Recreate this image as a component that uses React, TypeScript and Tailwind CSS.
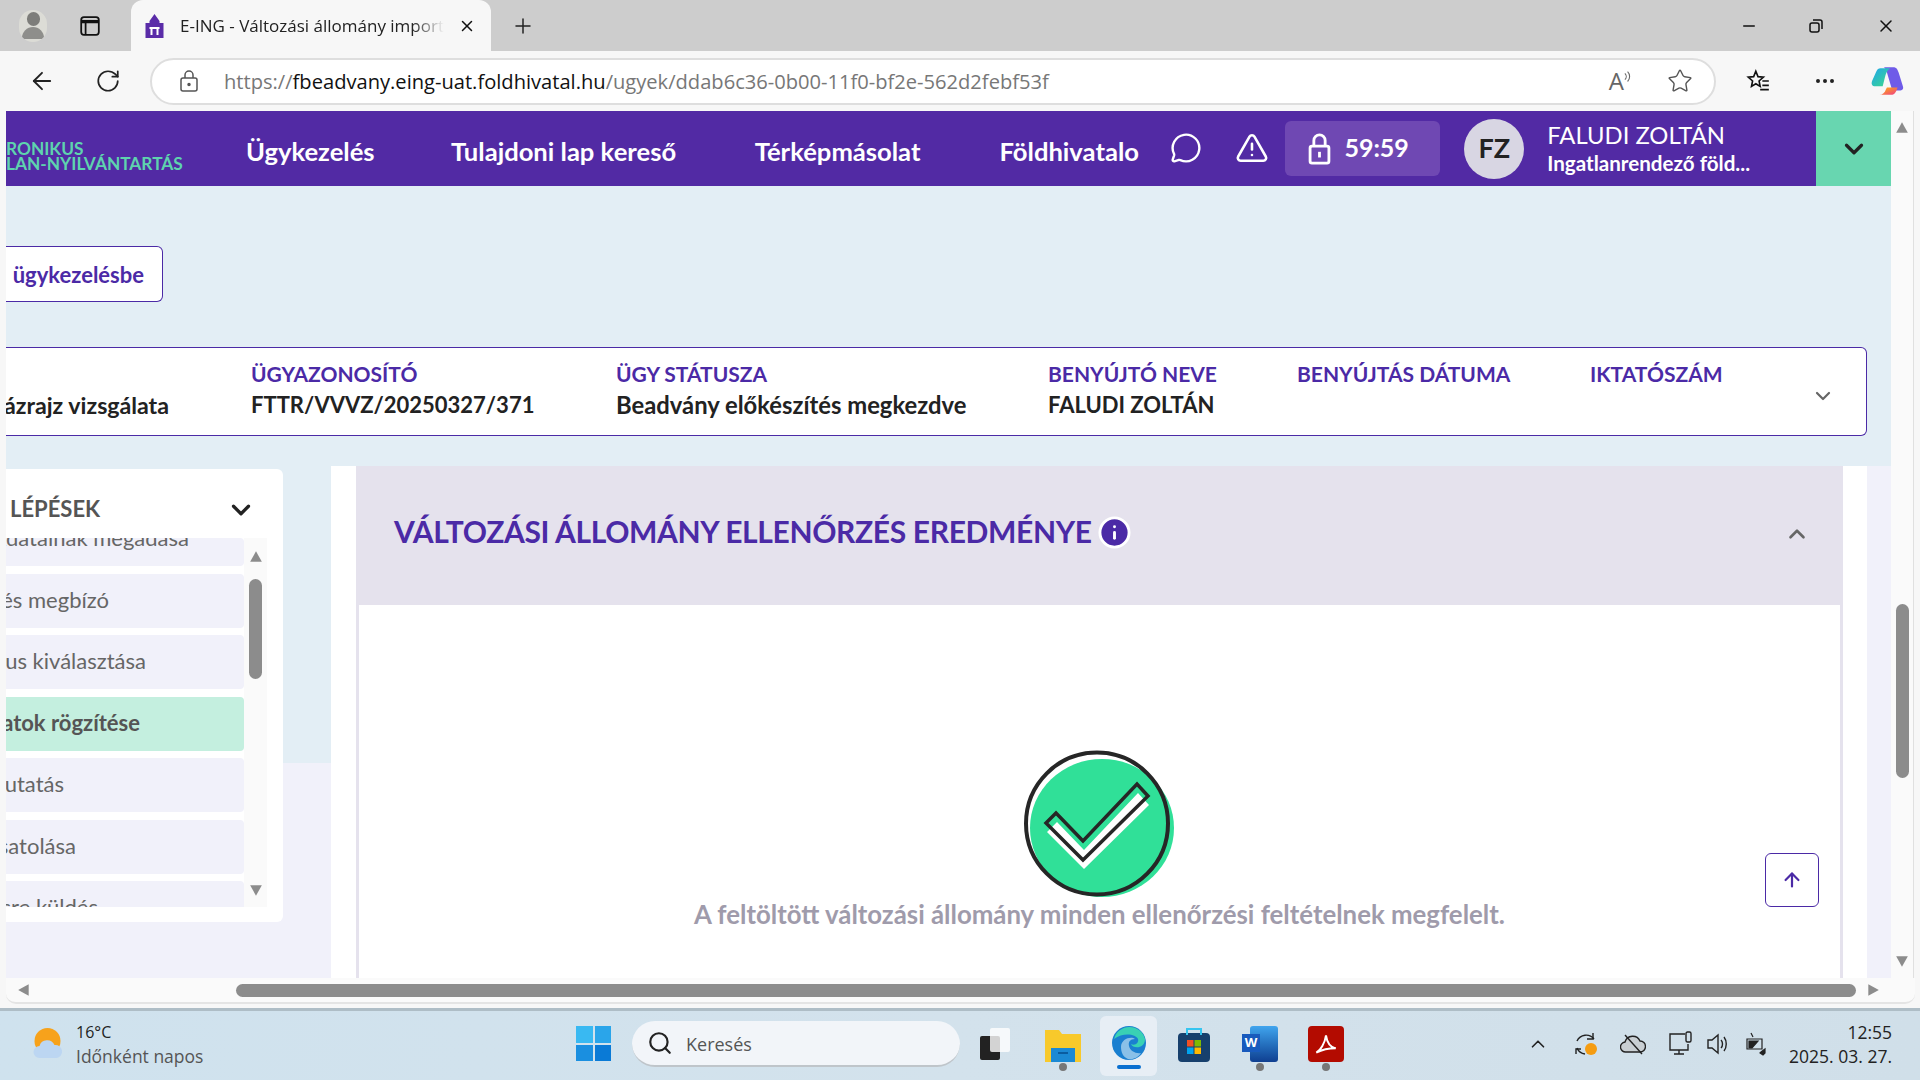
import { ArrowUp, ChevronDown, ChevronUp, MessageCircle, MoreHorizontal, Plus, RotateCw, Search, Star, TriangleAlert, X, Minus, ArrowLeft, Info } from "lucide-react";

const items = [
  { text: "Adatainak megadása", row: "h-[28px] items-start", box: "w-[183px] -mt-[14px]", active: false },
  { text: "Kérelmező és megbízó", row: "h-[54px] items-center pb-[2px]", box: "w-[103px]", active: false },
  { text: "Ügytípus kiválasztása", row: "h-[54px] items-center pb-[2px]", box: "w-[140px]", active: false },
  { text: "Adatok rögzítése", row: "h-[54px] items-center pb-[2px]", box: "w-[134px]", active: true },
  { text: "Kutatás", row: "h-[54px] items-center pb-[2px]", box: "w-[58px]", active: false },
  { text: "Csatolása", row: "h-[54px] items-center pb-[2px]", box: "w-[70px]", active: false },
  { text: "Ügyintézésre küldés", row: "h-[54px] items-center pb-[2px]", box: "w-[92px]", active: false },
];

const infoCols = [
  { label: "ÜGYAZONOSÍTÓ", value: "FTTR/VVVZ/20250327/371", w: "w-[365px]", size: "text-[22px]" },
  { label: "ÜGY STÁTUSZA", value: "Beadvány előkészítés megkezdve", w: "w-[432px]", size: "text-[23.800px]" },
  { label: "BENYÚJTÓ NEVE", value: "FALUDI ZOLTÁN", w: "w-[249px]", size: "text-[22px]" },
  { label: "BENYÚJTÁS DÁTUMA", value: "", w: "w-[293px]", size: "text-[22px]" },
  { label: "IKTATÓSZÁM", value: "", w: "w-[221px]", size: "text-[22px]" },
];

function Triangle({ dir, className }: { dir: "up" | "down" | "left" | "right"; className?: string }) {
  const pts = { up: "6,1 11,10 1,10", down: "1,2 11,2 6,11", left: "10,1 10,11 1,6", right: "2,1 2,11 11,6" }[dir];
  return (
    <svg viewBox="0 0 12 12" className={className}>
      <polygon points={pts} fill="#8c8c8c" />
    </svg>
  );
}

function TabStrip() {
  return (
    <div className="h-[51px] bg-[#cdcdcd] flex items-end shrink-0">
      <div className="w-[131px] h-[51px] flex items-center shrink-0">
        <div className="ml-[19px] w-[28px] h-[32px] rounded-full bg-[#dcdcd6] flex flex-col items-center justify-center overflow-hidden">
          <div className="w-[13px] h-[14px] rounded-full bg-[#7d7d7a]" />
          <div className="w-[22px] h-[12px] rounded-t-full bg-[#8e8e8b] mt-[1px]" />
        </div>
        <svg viewBox="0 0 20 20" className="ml-[32px] w-[22px] h-[22px]" fill="none" stroke="#111" strokeWidth="1.6">
          <rect x="2" y="2" width="16" height="16" rx="2.5" />
          <path d="M2 6h16" strokeWidth="3" />
          <path d="M6 6v12" />
        </svg>
      </div>
      <div className="w-[360px] h-[51px] bg-[#f7f7f7] rounded-t-[12px] flex items-center shrink-0">
        <svg viewBox="0 0 20 24" className="ml-[13px] w-[21px] h-[24px]">
          <path d="M10 0l5 7v2h4v15H1V9h4V7z" fill="#5a2ca8" />
          <path d="M5 13h10v2h-1v6h-2v-6H8v6H6v-6H5z" fill="#fff" />
        </svg>
        <div className="ml-[15px] w-[264px] overflow-hidden whitespace-nowrap font-['Open_Sans'] text-[17px] text-[#222] [mask-image:linear-gradient(to_right,black_88%,transparent)]">E-ING - Változási állomány importálása</div>
        <X className="ml-[14px] w-[18px] h-[18px] text-[#111]" strokeWidth={2} />
      </div>
      <div className="h-[51px] flex items-center">
        <Plus className="ml-[20px] w-[24px] h-[24px] text-[#222]" strokeWidth={1.5} />
      </div>
      <div className="flex-1 h-[51px] flex items-center justify-end text-[#111]">
        <Minus className="w-[18px] h-[18px]" strokeWidth={2} />
        <svg viewBox="0 0 16 16" className="ml-[50px] w-[16px] h-[16px]" fill="none" stroke="#111" strokeWidth="1.5">
          <rect x="2" y="5" width="9" height="9" rx="2" />
          <path d="M5 2h7a2 2 0 0 1 2 2v7" />
        </svg>
        <X className="ml-[52px] mr-[24px] w-[20px] h-[20px]" strokeWidth={1.8} />
      </div>
    </div>
  );
}

function Toolbar() {
  return (
    <div className="h-[60px] bg-[#f7f7f7] flex items-center shrink-0">
      <ArrowLeft className="ml-[28px] w-[28px] h-[28px] text-[#222]" strokeWidth={1.6} />
      <RotateCw className="ml-[39px] w-[26px] h-[26px] text-[#222]" strokeWidth={1.6} />
      <div className="ml-[29px] w-[1566px] h-[47px] rounded-full bg-white border-2 border-[#dedede] flex items-center">
        <svg viewBox="0 0 20 24" className="ml-[27px] w-[20px] h-[24px]" fill="none" stroke="#555" strokeWidth="1.5">
          <rect x="2" y="9" width="16" height="13" rx="2" />
          <path d="M6 9V6a4 4 0 0 1 8 0v3" />
          <circle cx="10" cy="15.500" r="1" fill="#555" />
        </svg>
        <div className="ml-[25px] font-['Open_Sans'] text-[20.120px] text-[#777] whitespace-nowrap">
          https://<span className="text-[#111]">fbeadvany.eing-uat.foldhivatal.hu</span>/ugyek/ddab6c36-0b00-11f0-bf2e-562d2febf53f
        </div>
        <div className="flex-1" />
        <span className="font-['Open_Sans'] text-[24px] text-[#666]">A</span>
        <svg viewBox="0 0 10 16" className="w-[9px] h-[18px] -mt-[8px]" fill="none" stroke="#666" strokeWidth="1.2">
          <path d="M1 4c2 2 2 5 0 7M4 2c3 3 3 8 0 11" />
        </svg>
        <Star className="ml-[34px] mr-[21px] w-[26px] h-[26px] text-[#555]" strokeWidth={1.3} />
      </div>
      <svg viewBox="0 0 24 24" className="ml-[29px] w-[26px] h-[26px]" fill="none" stroke="#111" strokeWidth="1.5">
        <path d="M10 3l2 5 5 .5-4 3.5 1 5-4-2.500-4 2.500 1-5L3 8.500 8 8z" />
        <path d="M16 12h6M16 16h6M14 20h8" />
      </svg>
      <MoreHorizontal className="ml-[42px] w-[24px] h-[24px] text-[#222]" strokeWidth={2} />
      <svg viewBox="0 0 32 32" className="ml-[34px] w-[34px] h-[34px]">
        <defs>
          <linearGradient id="cp1" x1="0" y1="0" x2="1" y2="1">
            <stop offset="0" stopColor="#1fa5ee" />
            <stop offset="1" stopColor="#3ddc84" />
          </linearGradient>
          <linearGradient id="cp2" x1="0" y1="0" x2="1" y2="1">
            <stop offset="0" stopColor="#ffb900" />
            <stop offset="1" stopColor="#f03a8c" />
          </linearGradient>
        </defs>
        <path d="M12 3h9c3 0 4 2 5 5l4 13c1 3-1 4-3 4h-7L15 8c-1-3-2-5-3-5z" fill="#6f5be8" />
        <path d="M9 4h9c-3 2-4 5-5 9l-2 8H4c-3 0-4-2-3-5L5 7c1-2 2-3 4-3z" fill="url(#cp1)" />
        <path d="M8 29h11c3 0 4-2 5-4l1-3H15l-1 2c-1 3-3 5-6 5z" fill="url(#cp2)" />
      </svg>
    </div>
  );
}

function Header() {
  return (
    <div className="h-[75px] bg-[#522aa4] flex items-center shrink-0 font-['Lato'] text-white">
      <div className="w-[178px] overflow-hidden flex flex-col items-end shrink-0 font-bold text-[#5ed3ae] text-[17.300px] leading-[15px] pt-[14px]">
        <div className="w-[178px] whitespace-nowrap">RONIKUS</div>
        <div className="w-[178px] whitespace-nowrap">LAN-NYILVÁNTARTÁS</div>
      </div>
      <div className="ml-[62px] w-[205px] pt-[6px] font-bold text-[25.600px] whitespace-nowrap">Ügykezelés</div>
      <div className="w-[304px] pt-[6px] font-bold text-[25.600px] whitespace-nowrap">Tulajdoni lap kereső</div>
      <div className="w-[245px] pt-[6px] font-bold text-[25.600px] whitespace-nowrap">Térképmásolat</div>
      <div className="w-[171px] pt-[6px] font-bold text-[25.600px] whitespace-nowrap overflow-hidden">Földhivatalo</div>
      <MessageCircle className="-mt-[2px] w-[32px] h-[32px]" strokeWidth={1.8} />
      <TriangleAlert className="ml-[33px] -mt-[2px] w-[34px] h-[34px]" strokeWidth={1.8} />
      <div className="ml-[16px] w-[155px] h-[55px] rounded-[6px] bg-[#6f48b3] flex items-center">
        <svg viewBox="0 0 24 34" className="ml-[23px] w-[23px] h-[32px]" fill="none" stroke="#fff" strokeWidth="3">
          <rect x="2" y="14" width="20" height="18" rx="2" />
          <path d="M6 14V8a6 6 0 0 1 12 0v6" />
          <path d="M12 20v6" />
        </svg>
        <span className="ml-[13px] -mt-[2px] font-bold text-[25px]">59:59</span>
      </div>
      <div className="ml-[24px] w-[60px] h-[60px] rounded-full bg-[#d8d6e3] flex items-center justify-center text-[#222] font-bold text-[27px]">FZ</div>
      <div className="ml-[23px] w-[269px]">
        <div className="text-[23.800px] leading-[28px] whitespace-nowrap">FALUDI ZOLTÁN</div>
        <div className="text-[20.600px] leading-[28px] font-bold whitespace-nowrap">Ingatlanrendező föld...</div>
      </div>
      <div className="w-[75px] h-[75px] bg-[#68d6b0] flex items-center justify-center">
        <ChevronDown className="w-[30px] h-[30px] text-[#222]" strokeWidth={2.6} />
      </div>
    </div>
  );
}

function InfoBox() {
  return (
    <div className="mt-[45px] mr-[24px] h-[89px] bg-white border border-[#4b2aa6] border-l-0 rounded-r-[6px] flex items-start font-['Lato']">
      <div className="w-[245px] pt-[42px] shrink-0 overflow-hidden flex">
        <div className="w-[163px] flex justify-end overflow-hidden font-bold text-[23.200px] leading-[30px] text-[#222] whitespace-nowrap">
          Tulajdoni vázrajz vizsgálata
        </div>
      </div>
      {infoCols.map((c) => (
        <div key={c.label} className={`${c.w} shrink-0 pt-[11px]`}>
          <div className="font-bold text-[21px] leading-[30px] text-[#4b2aa6] whitespace-nowrap">{c.label}</div>
          <div className={`font-bold ${c.size} leading-[32px] text-[#222] whitespace-nowrap`}>{c.value}</div>
        </div>
      ))}
      <ChevronDown className="mt-[36px] w-[24px] h-[24px] text-[#666]" strokeWidth={2.2} />
    </div>
  );
}

function Sidebar() {
  return (
    <div className="mt-[3px] w-[277px] h-[453px] bg-white rounded-r-[6px] font-['Lato'] flex flex-col">
      <div className="h-[69px] pt-[9px] flex items-center justify-between shrink-0">
        <span className="ml-[4px] font-bold text-[22px] text-[#555]">LÉPÉSEK</span>
        <ChevronDown className="mr-[27px] mt-[3px] w-[30px] h-[30px] text-[#222]" strokeWidth={2.6} />
      </div>
      <div className="h-[369px] flex">
        <div className="w-[238px] h-[369px] overflow-hidden flex flex-col gap-[7.500px] shrink-0">
          {items.map((it) => (
            <div
              key={it.text}
              className={`${it.row} shrink-0 rounded-r-[4px] flex overflow-hidden ${it.active ? "bg-[#c4efdf] font-bold text-[#555]" : "bg-[#f1f1fa] text-[#666]"}`}
            >
              <div className={`${it.box} flex justify-end overflow-hidden text-[22px] leading-[28px] whitespace-nowrap`}>{it.text}</div>
            </div>
          ))}
        </div>
        <div className="w-[23px] h-[369px] bg-[#fafafa] flex flex-col items-center shrink-0">
          <Triangle dir="up" className="mt-[12px] w-[16px] h-[14px]" />
          <div className="mt-[15px] w-[13px] h-[100px] rounded-full bg-[#8c8c8c]" />
          <div className="flex-1" />
          <Triangle dir="down" className="mb-[10px] w-[16px] h-[14px]" />
        </div>
      </div>
    </div>
  );
}

function SuccessIcon() {
  return (
    <svg viewBox="0 0 150 148" className="w-[150px] h-[148px] overflow-visible">
      <ellipse cx="79" cy="79" rx="72" ry="69" fill="#30e098" />
      <circle cx="74" cy="74.500" r="71" fill="none" stroke="#262626" strokeWidth="4" />
      <path d="M24 83L34 73L61 101L115 44L126 56L61 120Z" fill="#fff" />
      <path d="M23 74L33 64L60 92L114 35L125 47L60 111Z" fill="none" stroke="#262626" strokeWidth="3.500" />
    </svg>
  );
}

function Dot() {
  return <div className="absolute left-1/2 -translate-x-1/2 -bottom-[9px] w-[8px] h-[8px] rounded-full bg-[#777]" />;
}

function Taskbar() {
  return (
    <div className="h-[72px] pb-[4px] border-t-[3px] border-[#aebdc6] bg-gradient-to-r from-[#cfe2ee] via-[#d3e2ec] to-[#d0dfe9] flex items-center shrink-0 font-['Open_Sans'] text-[#222]">
      <svg viewBox="0 0 32 34" className="ml-[31px] w-[33px] h-[34px] shrink-0">
        <circle cx="16" cy="14" r="13" fill="#f7a21b" />
        <path d="M8 31a6 6 0 0 1 0-12 8 8 0 0 1 15-1 6.500 6.500 0 0 1 2 13z" fill="#bcd6f2" />
      </svg>
      <div className="ml-[12px] w-[500px] shrink-0">
        <div className="text-[16px] leading-[24px]">16°C</div>
        <div className="text-[17.500px] leading-[24px] text-[#555]">Időnként napos</div>
      </div>
      <div className="w-[35px] h-[35px] grid grid-cols-2 gap-[2px] shrink-0">
        <div className="bg-[#39b9f2]" />
        <div className="bg-[#2aa5ea]" />
        <div className="bg-[#1a8fe0]" />
        <div className="bg-[#0a7ad6]" />
      </div>
      <div className="ml-[21px] w-[328px] h-[46px] rounded-full bg-[#f2f5f9] border-b-2 border-[#bfc5ca] flex items-center shrink-0">
        <Search className="ml-[15px] w-[26px] h-[26px] text-[#222]" strokeWidth={2} />
        <span className="ml-[13px] mt-[3px] text-[18px] text-[#555]">Keresés</span>
      </div>
      <div className="ml-[20px] w-[30px] h-[32px] relative shrink-0">
        <div className="w-[20px] h-[24px] bg-[#222] rounded-[2px] absolute left-0 bottom-0" />
        <div className="w-[20px] h-[24px] bg-white/80 rounded-[2px] absolute right-0 top-0" />
      </div>
      <div className="ml-[35px] w-[36px] h-[36px] relative shrink-0">
        <svg viewBox="0 0 36 36" className="w-[36px] h-[36px]">
          <path d="M0 4h14l3 4h19v28H0z" fill="#f8c92b" />
          <path d="M6 22h24v14H6z" fill="#1b89d4" />
          <path d="M13 27h10" stroke="#0a5ca0" strokeWidth="2" />
        </svg>
        <Dot />
      </div>
      <div className="ml-[19px] w-[57px] h-[60px] mt-[4px] rounded-[6px] bg-[#e7eef5] flex flex-col items-center justify-center shrink-0">
        <svg viewBox="0 0 36 36" className="w-[36px] h-[38px] mt-[2px]">
          <circle cx="18" cy="18" r="17" fill="#1a7fd0" />
          <path d="M3 14A16 16 0 0 1 34 14C34 24 22 24 20 19c4 2 8-1 7-5-2-5-15-7-24 0z" fill="#39d1b4" />
          <path d="M10 22c0-8 10-11 14-8-5 0-7 3-6 7 1 5 7 8 12 7-3 5-9 7-13 6-5-2-7-7-7-12z" fill="#e7f5fc" opacity="0.55" />
        </svg>
        <div className="mt-[3px] w-[24px] h-[4px] rounded-full bg-[#0a6fd0]" />
      </div>
      <svg viewBox="0 0 36 36" className="ml-[19px] w-[36px] h-[40px] shrink-0">
        <rect x="2" y="7" width="32" height="29" rx="4" fill="#17406d" />
        <path d="M11 9V3h14v6" fill="none" stroke="#36c5f0" strokeWidth="2" />
        <rect x="11" y="14" width="6.500" height="6.500" fill="#f25022" />
        <rect x="18.500" y="14" width="6.500" height="6.500" fill="#7fba00" />
        <rect x="11" y="21.500" width="6.500" height="6.500" fill="#00a4ef" />
        <rect x="18.500" y="21.500" width="6.500" height="6.500" fill="#ffb900" />
      </svg>
      <div className="ml-[30px] w-[36px] h-[36px] relative shrink-0">
        <div className="w-[28px] h-[36px] ml-[8px] rounded-[3px] bg-gradient-to-b from-[#41a5ee] to-[#103f91]" />
        <div className="absolute left-0 top-[8px] w-[18px] h-[18px] bg-[#185abd] text-white text-[13px] font-bold flex items-center justify-center">W</div>
        <Dot />
      </div>
      <div className="ml-[30px] w-[36px] h-[36px] relative rounded-[4px] bg-[#b30b00] flex items-center justify-center shrink-0">
        <svg viewBox="0 0 24 24" className="w-[26px] h-[26px]" fill="none" stroke="#fff" strokeWidth="1.8">
          <path d="M3 20c4-2 8-9 9-16 1 7 4 11 9 12-6 0-12 1-18 4z" />
        </svg>
        <Dot />
      </div>
      <ChevronUp className="ml-[183px] w-[22px] h-[22px] shrink-0" strokeWidth={1.8} />
      <svg viewBox="0 0 26 26" className="ml-[24px] w-[26px] h-[26px] shrink-0" fill="none" stroke="#222" strokeWidth="1.4">
        <path d="M21 8A10 10 0 0 0 4 10M4 17a10 10 0 0 0 8 6" />
        <path d="M20 2v6h-6M3 23v-5h5" />
        <circle cx="18" cy="18" r="6" fill="#f59c11" stroke="none" />
      </svg>
      <svg viewBox="0 0 26 26" className="ml-[21px] w-[26px] h-[26px] shrink-0" fill="#c9cfd3" stroke="#222" strokeWidth="1.4">
        <path d="M6 21a5 5 0 0 1-1-10 8 8 0 0 1 15-1 5.500 5.500 0 0 1 0 11z" />
        <path d="M5 4l17 19" />
      </svg>
      <svg viewBox="0 0 26 26" className="ml-[22px] w-[26px] h-[26px] shrink-0" fill="none" stroke="#222" strokeWidth="1.4">
        <path d="M17 3H2v16h18v-6M11 19v4M6 23h10" />
        <rect x="18" y="1" width="5" height="10" rx="1.500" />
      </svg>
      <svg viewBox="0 0 26 26" className="ml-[11px] w-[26px] h-[26px] shrink-0" fill="none" stroke="#222" strokeWidth="1.4">
        <path d="M3 9v8h4l6 5V4L7 9z" />
        <path d="M16 9c2 2 2 6 0 8M19 6c3 4 3 10 0 14" />
      </svg>
      <svg viewBox="0 0 26 26" className="ml-[11px] w-[26px] h-[26px] shrink-0" fill="#222" stroke="#222" strokeWidth="1.2">
        <path d="M5 8h15v10H5z" fill="none" />
        <path d="M7 10h9l-6 7H7z" />
        <path d="M9 2l2 4M19 21l4-3v4l-2 2-3-2z" />
      </svg>
      <div className="flex-1 text-right pr-[28px] text-[17.500px] leading-[24px] whitespace-nowrap">
        <div>12:55</div>
        <div>2025. 03. 27.</div>
      </div>
    </div>
  );
}

export default function App() {
  return (
    <div className="w-[1920px] h-[1080px] overflow-hidden flex flex-col bg-[#f7f7f7]">
      <TabStrip />
      <Toolbar />

      <div className="h-[897px] pl-[6px] pr-[5px] shrink-0 flex flex-col">
        <div className="h-[867px] flex shrink-0">
          <div className="w-[1885px] flex flex-col shrink-0 bg-[#e3eef5]">
            <Header />

            {/* Top of the page, scrolled to the right */}
            <div className="h-[280px] flex flex-col shrink-0">
              <div className="mt-[60px] w-[157px] h-[56px] bg-white border border-[#4b2aa6] border-l-0 rounded-r-[6px] flex items-center justify-end shrink-0">
                <span className="mr-[18px] font-['Lato'] font-bold text-[22px] text-[#4b2aa6]">ügykezelésbe</span>
              </div>
              <InfoBox />
            </div>

            <div className="flex-1 flex min-h-0">
              <div className="w-[325px] shrink-0 bg-[linear-gradient(#e3eef5_297px,#f1f1fa_297px)]">
                <Sidebar />
              </div>
              <div className="w-[1536px] shrink-0 bg-white flex flex-col relative">
                <div className="ml-[25px] w-[1487px] h-[139px] bg-[#e5e2ed] flex items-center shrink-0">
                  <span className="ml-[38px] -mt-[8px] font-['Lato'] font-bold text-[30px] tracking-[-0.35px] text-[#4b2aa6] whitespace-nowrap">VÁLTOZÁSI ÁLLOMÁNY ELLENŐRZÉS EREDMÉNYE</span>
                  <Info className="ml-[5px] -mt-[7px] w-[35px] h-[35px] fill-[#4b2aa6] text-white" strokeWidth={2} />
                  <div className="flex-1" />
                  <ChevronUp className="mr-[33px] -mt-[4px] w-[26px] h-[26px] text-[#666]" strokeWidth={2.4} />
                </div>
                <div className="ml-[25px] w-[1487px] flex-1 border-x-[3px] border-[#e5e2ed] flex flex-col items-center">
                  <div className="mt-[144px] -ml-[3px]">
                    <SuccessIcon />
                  </div>
                  <div className="font-['Lato'] font-bold text-[25.800px] text-[#9f9bab] -mt-[2px] whitespace-nowrap">A feltöltött változási állomány minden ellenőrzési feltételnek megfelelt.</div>
                </div>
                <div className="absolute left-[1434px] top-[387px] w-[54px] h-[54px] bg-white border border-[#4b2aa6] rounded-[6px] flex items-center justify-center">
                  <ArrowUp className="w-[22px] h-[22px] text-[#4b2aa6]" strokeWidth={2.4} />
                </div>
              </div>
              <div className="w-[24px] shrink-0 bg-[#f1f1fa]" />
            </div>
          </div>
          <div className="w-[23px] shrink-0 bg-[#fafafa] border-r border-[#e0e0e0] flex flex-col items-center">
            <Triangle dir="up" className="mt-[10px] w-[16px] h-[14px]" />
            <div className="mt-[469px] w-[13px] h-[174px] rounded-full bg-[#8c8c8c]" />
            <div className="flex-1" />
            <Triangle dir="down" className="mb-[10px] w-[16px] h-[14px]" />
          </div>
        </div>
        <div className="h-[26px] bg-[#fafafa] rounded-b-[10px] border-b-2 border-[#e4e4e4] flex items-center shrink-0">
          <Triangle dir="left" className="ml-[11px] w-[14px] h-[16px]" />
          <div className="ml-[205px] w-[1620px] h-[13px] rounded-full bg-[#8c8c8c]" />
          <Triangle dir="right" className="ml-[10px] w-[14px] h-[16px]" />
        </div>
      </div>

      <Taskbar />
    </div>
  );
}
